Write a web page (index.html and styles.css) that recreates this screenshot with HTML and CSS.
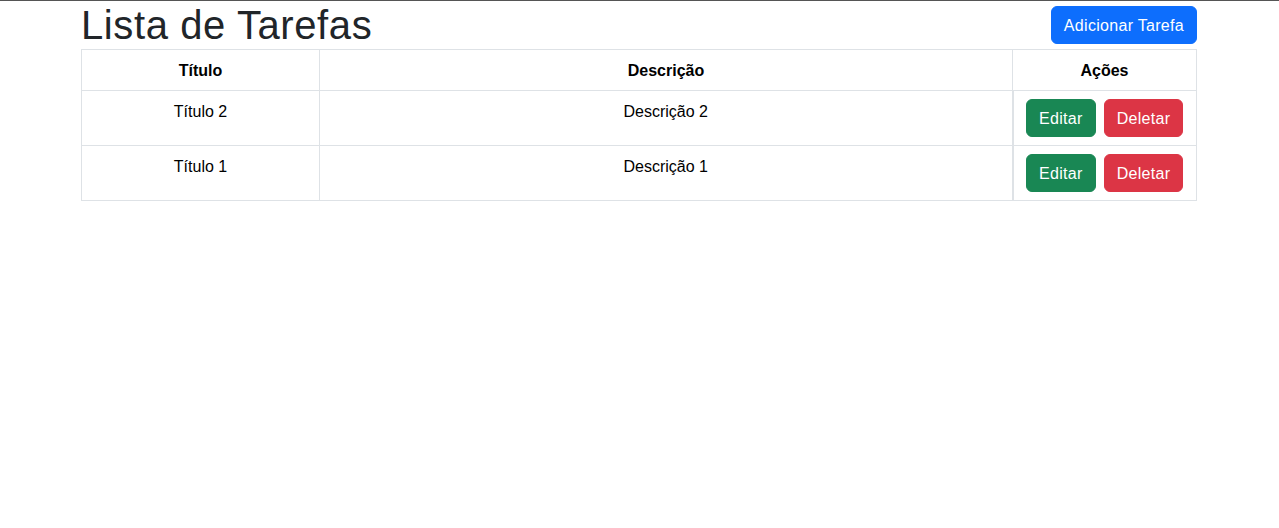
FILE: index.html
```html
<!DOCTYPE html>
<html lang="pt">
<head>
<meta charset="utf-8">
<title>Lista de Tarefas</title>
<link rel="stylesheet" href="styles.css">
</head>
<body>
<div class="topline"></div>
<div class="container">
  <div class="header">
    <h1 class="title">Lista de Tarefas</h1>
    <button class="btn btn-primary">Adicionar Tarefa</button>
  </div>
  <table class="table">
    <colgroup>
      <col class="col-title">
      <col class="col-desc">
      <col class="col-actions">
    </colgroup>
    <thead>
      <tr><th>Título</th><th>Descrição</th><th>Ações</th></tr>
    </thead>
    <tbody>
      <tr>
        <td>Título 2</td>
        <td>Descrição 2</td>
        <td class="actions"><button class="btn btn-success">Editar</button><button class="btn btn-danger">Deletar</button></td>
      </tr>
      <tr>
        <td>Título 1</td>
        <td>Descrição 1</td>
        <td class="actions"><button class="btn btn-success">Editar</button><button class="btn btn-danger">Deletar</button></td>
      </tr>
    </tbody>
  </table>
</div>
</body>
</html>
```
FILE: styles.css
```css
* { box-sizing: border-box; }
html, body { margin: 0; padding: 0; }
body {
  font-family: "Liberation Sans", Arial, sans-serif;
  font-size: 16px;
  line-height: 1.5;
  color: #212529;
  background: #fff;
}
.topline { height: 1px; background: #555555; }
.container {
  width: 1140px;
  max-width: 100%;
  margin-left: calc((100% - 1141px) / 2);
  padding: 0 12px;
}
.header {
  display: flex;
  justify-content: space-between;
  align-items: center;
}
.title {
  margin: 0;
  font-size: 40px;
  font-weight: 500;
  line-height: 48px;
  letter-spacing: 0.6px;
  color: #212529;
}
.btn {
  display: inline-block;
  font-family: inherit;
  font-size: 16px;
  line-height: 24px;
  letter-spacing: 0.3px;
  padding: 7px 12px 5px;
  border: 1px solid transparent;
  border-radius: 6px;
  color: #fff;
  cursor: pointer;
}
.btn-primary { background: #0d6efd; border-color: #0d6efd; }
.btn-success { background: #198754; border-color: #198754; }
.btn-danger { background: #dc3545; border-color: #dc3545; }
.table {
  width: 100%;
  border-collapse: collapse;
  color: #000;
  text-align: center;
}
.col-title { width: 238px; }
.col-desc { width: 693px; }
.table th, .table td {
  border: 1px solid #dee2e6;
  padding: 9px 8px 7px;
  vertical-align: top;
}
.table th { font-weight: 700; }
.table td.actions {
  border-left-width: 2px;
  white-space: nowrap;
  padding-top: 8px;
  padding-bottom: 8px;
}
.actions .btn + .btn { margin-left: 8px; }
```
